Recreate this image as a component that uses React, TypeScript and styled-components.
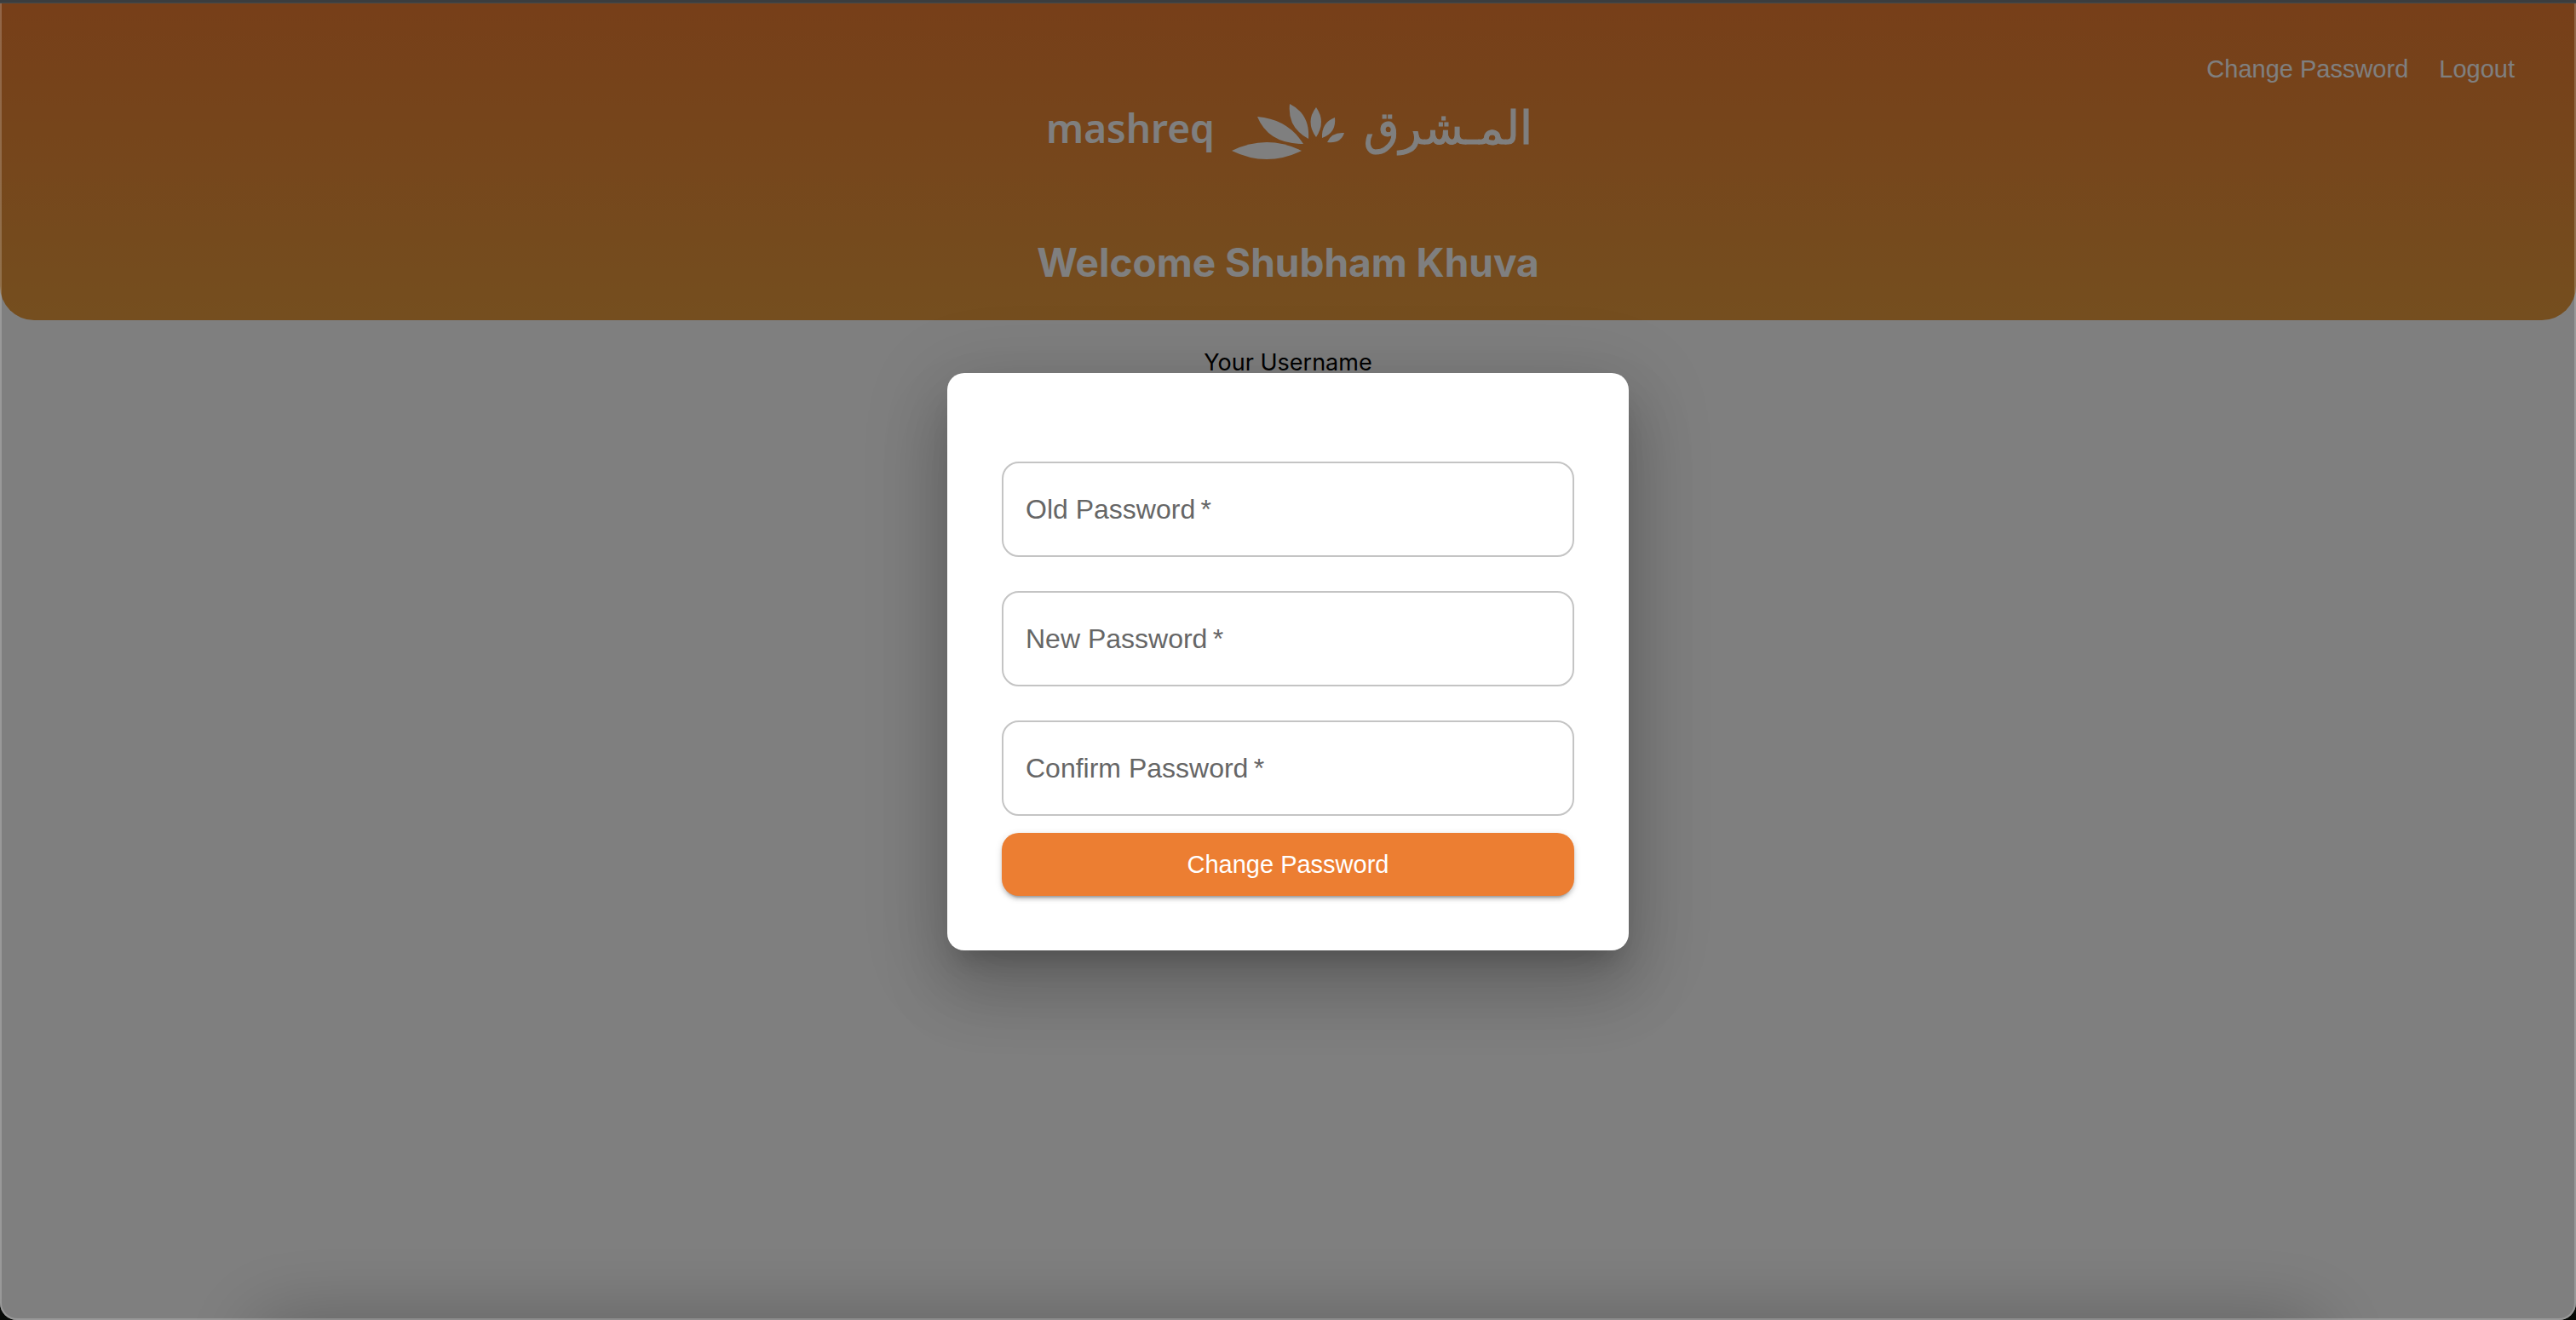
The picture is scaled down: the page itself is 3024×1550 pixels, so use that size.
import React from "react";
import styled, { createGlobalStyle } from "styled-components";

const sans = `"Liberation Sans", Arial, Helvetica, sans-serif`;
const display = `Inter, Roboto, sans-serif`;

const GlobalStyle = createGlobalStyle`
  *, *::before, *::after { box-sizing: border-box; }
  body { margin: 0; background: #060906; font-family: ${sans}; }
`;

const Shell = styled.div`
  display: flex;
  flex-direction: column;
  min-height: 100vh;
`;

const TitleEdge = styled.div`
  height: 4px;
  background: #3b3d3f;
  border-bottom: 1px solid #464a4a;
`;

const Page = styled.div`
  position: relative;
  flex: 1;
  display: flex;
  flex-direction: column;
  overflow: hidden;
  background: #ffffff;
  border-radius: 0 0 20px 20px;
`;

const Header = styled.header`
  display: flex;
  flex-direction: column;
  align-items: center;
  padding: 40px 72px;
  color: #ffffff;
  background: linear-gradient(180deg, #ee7e32 0%, #ea9d3e 100%);
  border-radius: 0 0 40px 40px;
`;

const Nav = styled.nav`
  align-self: stretch;
  display: flex;
  justify-content: flex-end;
  gap: 36px;
`;

const NavButton = styled.button`
  padding: 0;
  border: 0;
  background: none;
  color: inherit;
  font: 400 29px/74px ${sans};
  cursor: pointer;
`;

const Logo = styled.svg`
  display: block;
  width: 584px;
  height: 80px;
  fill: currentColor;
`;

const LogoLatin = styled.text`
  font: 600 46px "Noto Sans", "Open Sans", sans-serif;
`;

const LogoArabic = styled.text`
  font: 400 54px "DejaVu Sans", sans-serif;
  direction: rtl;
  stroke: currentColor;
  stroke-width: 1px;
`;

const Welcome = styled.h1`
  margin: 82px 0 0;
  font: 700 46px/56px ${display};
`;

const Main = styled.main`
  flex: 1;
  display: flex;
  flex-direction: column;
  align-items: center;
  justify-content: space-between;
  padding-top: 32px;
`;

const Username = styled.p`
  margin: 0;
  color: #000000;
  font: 400 27px/36px ${display};
`;

const FooterShade = styled.div`
  width: 77%;
  height: 0;
  box-shadow: 0 46px 92px 46px rgba(0, 0, 0, 0.26);
`;

const Backdrop = styled.div`
  position: absolute;
  inset: 0;
  display: flex;
  align-items: center;
  justify-content: center;
  background: rgba(0, 0, 0, 0.5);
`;

const WindowEdge = styled.div`
  position: absolute;
  inset: 0;
  border: 2px solid rgba(255, 255, 255, 0.2);
  border-top: 0;
  border-radius: 0 0 20px 20px;
  pointer-events: none;
`;

const Dialog = styled.form`
  display: flex;
  flex-direction: column;
  gap: 40px;
  width: 800px;
  max-width: 100%;
  padding: 104px 64px 64px;
  background: #ffffff;
  border-radius: 20px;
  box-shadow:
    0 22px 30px -14px rgba(0, 0, 0, 0.2),
    0 48px 76px 6px rgba(0, 0, 0, 0.14),
    0 18px 92px 16px rgba(0, 0, 0, 0.12);
`;

const Field = styled.div`
  display: flex;
  align-items: center;
  gap: 8px;
  height: 112px;
  padding: 0 26px;
  border: 2px solid #c4c4c4;
  border-radius: 20px;
  color: #666666;
  font: 400 32px/46px ${sans};
`;

const Input = styled.input`
  flex: 1;
  min-width: 0;
  height: 100%;
  padding: 0;
  border: 0;
  outline: 0;
  background: none;
  color: #212121;
  font: inherit;
`;

const Submit = styled.button`
  height: 74px;
  margin-top: -20px;
  border: 0;
  border-radius: 20px;
  background: #ec7e32;
  color: #ffffff;
  font: 400 29px/48px ${sans};
  cursor: pointer;
  box-shadow:
    0 6px 2px -4px rgba(0, 0, 0, 0.2),
    0 4px 4px 0 rgba(0, 0, 0, 0.14),
    0 2px 10px 0 rgba(0, 0, 0, 0.12);
`;

const fields = [
  { id: "old-password", label: "Old Password" },
  { id: "new-password", label: "New Password" },
  { id: "confirm-password", label: "Confirm Password" },
];

function MashreqLogo() {
  return (
    <Logo viewBox="0 0 584 80" role="img" aria-label="mashreq">
      <LogoLatin x="8" y="50">mashreq</LogoLatin>
      <path d="M226 59Q267 39 308 59Q267 79 226 59Z" />
      <path d="M256 19Q292 22 310 51Q269 51 256 19Z" />
      <path d="M294 4Q318 16 316 45Q291 32 294 4Z" />
      <path d="M325 8Q337 25 325 43Q312 25 325 8Z" />
      <path d="M347 20Q349 38 332 44Q331 26 347 20Z" />
      <path d="M358 38Q354 51 338 49Q343 37 358 38Z" />
      <LogoArabic x="579" y="51">المـشرق</LogoArabic>
    </Logo>
  );
}

export default function App() {
  return (
    <>
      <GlobalStyle />
      <Shell>
        <TitleEdge />
        <Page>
          <Header>
            <Nav>
              <NavButton type="button">Change Password</NavButton>
              <NavButton type="button">Logout</NavButton>
            </Nav>
            <MashreqLogo />
            <Welcome>Welcome Shubham Khuva</Welcome>
          </Header>
          <Main>
            <Username>Your Username</Username>
            <FooterShade />
          </Main>
          <Backdrop>
            <Dialog role="dialog" aria-label="Change Password" onSubmit={(e) => e.preventDefault()}>
              {fields.map(({ id, label }) => (
                <Field key={id}>
                  <label htmlFor={id}>{label}&thinsp;*</label>
                  <Input id={id} type="password" required />
                </Field>
              ))}
              <Submit type="submit">Change Password</Submit>
            </Dialog>
          </Backdrop>
          <WindowEdge />
        </Page>
      </Shell>
    </>
  );
}
